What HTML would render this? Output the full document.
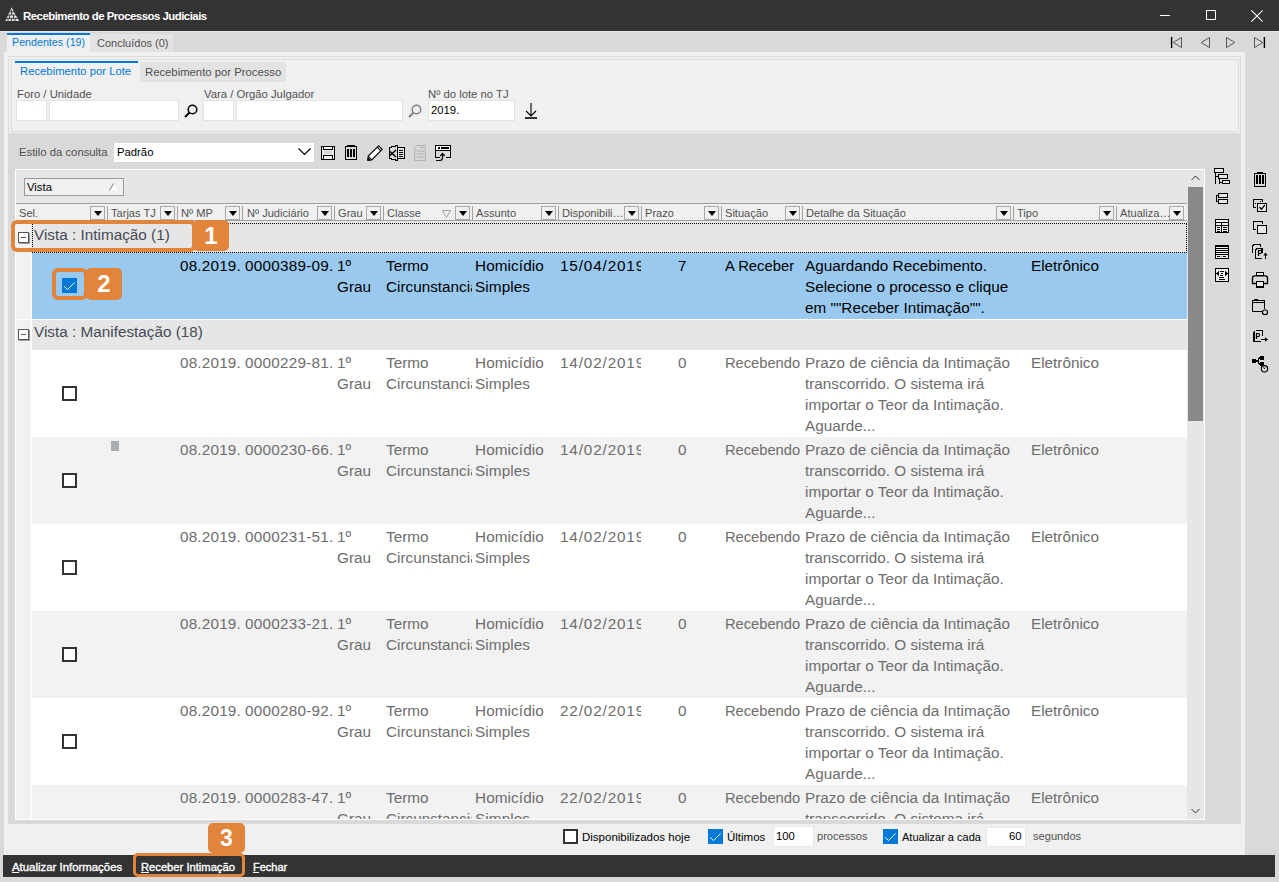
<!DOCTYPE html>
<html><head><meta charset="utf-8">
<style>
*{margin:0;padding:0;box-sizing:border-box}
html,body{width:1279px;height:882px;overflow:hidden;background:#d9d9d9;font-family:"Liberation Sans",sans-serif;}
.a{position:absolute}
.t{position:absolute;white-space:nowrap;font-size:11.3px;line-height:13px;color:#505050}
.inp{position:absolute;background:#fff;border:1px solid #e3e3e3}
.dd{position:absolute;width:15px;height:14px;border:1px solid #a8a8a8;background:#f0f0f0}
.dd:after{content:"";position:absolute;left:3px;top:4px;border-left:4px solid transparent;border-right:4px solid transparent;border-top:5px solid #000}
.sep{position:absolute;width:1px;height:14px;top:206px;background:#a0a0a0}
.ht{position:absolute;white-space:nowrap;font-size:11.1px;line-height:13px;color:#505050;top:207px}
.rt{position:absolute;white-space:pre;font-size:15.3px;line-height:21px;color:#6d6d6d}
.cb{position:absolute;width:15px;height:15px;border:2px solid #333;background:#fff}
.cbc{position:absolute;width:15px;height:15px;background:#0078d7}
.cbc svg{position:absolute;left:0;top:0}
.og{position:absolute;background:#e2843a;border-radius:5px;color:#fff;font-weight:bold;text-align:center}
.ob{position:absolute;border:3px solid #e2843a;border-radius:5px}
svg{position:absolute;overflow:visible}
</style></head><body>

<!-- TITLE BAR -->
<div class="a" style="left:0;top:0;width:1279px;height:31px;background:#333"></div>
<svg style="left:5px;top:7px" width="15" height="15" viewBox="0 0 15 15">
  <path d="M6.5 0.3 L14.2 14 L0.4 14 Z" fill="#e0e0e0"/>
  <path d="M0 4.8 H15 M0 8 H15 M0 11.4 H15" stroke="#333" stroke-width="0.9"/>
  <path d="M6.5 4.8 V8 M4.5 8 V11.4 M8.5 8 V11.4 M3 11.4 V14 M6.5 11.4 V14 M10 11.4 V14 M5.5 2 L7 4.8" stroke="#333" stroke-width="0.9"/>
</svg>
<div class="t" style="left:23px;top:10px;font-size:11.4px;font-weight:bold;color:#fff;letter-spacing:-0.5px">Recebimento de Processos Judiciais</div>
<div class="a" style="left:1160px;top:15px;width:10px;height:1px;background:#fff"></div>
<div class="a" style="left:1206px;top:10px;width:10px;height:10px;border:1px solid #fff"></div>
<svg style="left:1251px;top:10px" width="12" height="12" viewBox="0 0 12 12"><path d="M0.3 0.3 L11.7 11.7 M11.7 0.3 L0.3 11.7" stroke="#fff" stroke-width="1.1"/></svg>

<!-- TAB STRIP -->
<div class="a" style="left:0;top:31px;width:1279px;height:1px;background:#e8e8e8"></div>
<div class="a" style="left:7px;top:33px;width:83px;height:19px;background:#f0f0f0;border-top:2px solid #0078d7"></div>
<div class="t" style="left:12px;top:36px;color:#0078d7;font-size:10.7px">Pendentes (19)</div>
<div class="a" style="left:90px;top:34px;width:83px;height:18px;background:#e3e3e3"></div>
<div class="t" style="left:97px;top:37px;font-size:11px">Concluídos (0)</div>
<!-- nav arrows -->
<svg style="left:0;top:0" width="1279" height="60">
 <path d="M1171.6 37 V48 M1264.4 37 V48" stroke="#000" stroke-width="1.4"/>
 <path d="M1181.5 37.5 L1173.2 42.5 L1181.5 47.5 Z M1209.5 37.5 L1201.2 42.5 L1209.5 47.5 Z M1226.5 37.5 L1234.8 42.5 L1226.5 47.5 Z M1254.5 37.5 L1262.8 42.5 L1254.5 47.5 Z" fill="none" stroke="#555" stroke-width="1"/>
</svg>

<!-- TAB PANE -->
<div class="a" style="left:4px;top:52px;width:1241px;height:803px;background:#f0f0f0"></div>
<!-- filter group -->
<div class="a" style="left:8px;top:56px;width:1233px;height:78px;border:1px solid #dcdcdc"></div>
<div class="a" style="left:11px;top:59px;width:1228px;height:73px;border:1px solid #dcdcdc"></div>
<div class="a" style="left:15px;top:61px;width:123px;height:20px;background:#f0f0f0;border-top:2px solid #0078d7"></div>
<div class="t" style="left:20px;top:65px;color:#0078d7">Recebimento por Lote</div>
<div class="a" style="left:140px;top:62px;width:146px;height:20px;background:#e3e3e3"></div>
<div class="t" style="left:145px;top:66px">Recebimento por Processo</div>

<div class="t" style="left:17px;top:88px">Foro / Unidade</div>
<div class="inp" style="left:16px;top:100px;width:31px;height:21px"></div>
<div class="inp" style="left:49px;top:100px;width:130px;height:21px"></div>
<svg style="left:184px;top:104px" width="14" height="14" viewBox="0 0 14 14"><circle cx="8.5" cy="5.5" r="4.3" fill="none" stroke="#000" stroke-width="1.5"/><path d="M5.5 8.5 L1 13" stroke="#000" stroke-width="2"/></svg>
<div class="t" style="left:204px;top:88px">Vara / Orgão Julgador</div>
<div class="inp" style="left:203px;top:100px;width:31px;height:21px"></div>
<div class="inp" style="left:236px;top:100px;width:167px;height:21px"></div>
<svg style="left:408px;top:104px" width="14" height="14" viewBox="0 0 14 14"><circle cx="8.5" cy="5.5" r="4.3" fill="none" stroke="#808080" stroke-width="1.5"/><path d="M5.5 8.5 L1 13" stroke="#808080" stroke-width="2"/></svg>
<div class="t" style="left:428px;top:88px">Nº do lote no TJ</div>
<div class="inp" style="left:428px;top:100px;width:87px;height:21px"></div>
<div class="t" style="left:431px;top:104px;color:#000">2019.</div>
<svg style="left:525px;top:103px" width="12" height="16" viewBox="0 0 12 16"><path d="M6 0 V13 M1 8 L6 13 L11 8" fill="none" stroke="#000" stroke-width="1.1"/><path d="M0 15 H12" stroke="#000" stroke-width="1.6"/></svg>

<!-- GRAY INNER PANEL -->
<div class="a" style="left:8px;top:134px;width:1233px;height:690px;background:#d9d9d9"></div>


<!-- ESTILO TOOLBAR -->
<div class="t" style="left:19px;top:146px;color:#505050">Estilo da consulta</div>
<div class="a" style="left:114px;top:143px;width:200px;height:19px;background:#fff"></div>
<div class="t" style="left:117px;top:146px;color:#000">Padrão</div>
<svg style="left:298px;top:148px" width="13" height="8" viewBox="0 0 13 8"><path d="M0.5 0.5 L6.5 6.5 L12.5 0.5" fill="none" stroke="#000" stroke-width="1.2"/></svg>
<!-- save -->
<svg style="left:0;top:0" width="1279" height="882" shape-rendering="crispEdges">
 <rect x="321" y="146" width="14" height="14" fill="#000"/>
 <rect x="322" y="147" width="12" height="12" fill="#ececec"/>
 <rect x="324" y="151" width="8" height="3" fill="#d9d9d9"/>
 <rect x="323" y="147" width="10" height="3" fill="#000"/>
 <rect x="324" y="147" width="8" height="2" fill="#fafafa"/>
 <rect x="323" y="155" width="10" height="4" fill="#000"/>
 <rect x="324" y="156" width="8" height="3" fill="#f4f4f4"/>
 <rect x="345" y="146" width="12" height="14" fill="#000"/>
 <rect x="346" y="147" width="10" height="12" fill="#d9d9d9"/>
 <rect x="347" y="145" width="8" height="1" fill="#000"/>
 <rect x="347" y="149" width="2" height="8" fill="#000"/>
 <rect x="350" y="149" width="2" height="8" fill="#000"/>
 <rect x="353" y="149" width="2" height="8" fill="#000"/>
 <rect x="1254" y="173" width="12" height="14" fill="#000"/>
 <rect x="1255" y="174" width="10" height="12" fill="#d9d9d9"/>
 <rect x="1257" y="172" width="6" height="1" fill="#000"/>
 <rect x="1256" y="175" width="2" height="9" fill="#000"/>
 <rect x="1259" y="175" width="2" height="9" fill="#000"/>
 <rect x="1262" y="175" width="2" height="9" fill="#000"/>
</svg>
<!-- pencil -->
<svg style="left:367px;top:145px" width="16" height="16" viewBox="0 0 16 16">
 <path d="M0.7 15.3 L1.2 11.2 L11.6 0.8 L15.2 4.4 L4.8 14.8 Z" fill="#fff" stroke="#000" stroke-width="1.2" stroke-linejoin="round"/>
 <path d="M1.2 11.2 L4.8 14.8 M10.2 2.2 L13.8 5.8" stroke="#000" stroke-width="1.1"/>
 <path d="M0.7 15.3 L1.1 12.6 L3.4 14.9 Z" fill="#000"/>
</svg>
<!-- excel -->
<svg style="left:0;top:0" width="1279" height="882" shape-rendering="crispEdges">
 <path d="M398 145.5 H395.5 V146.5 H391.5 V147.5 H389.5 V158.5 H391.5 V159.5 H395.5 V160.5 H398" fill="none" stroke="#000" stroke-width="1.2"/>
 <rect x="397" y="145" width="1.3" height="16" fill="#000"/>
 <rect x="397.5" y="147.5" width="7" height="11" fill="#e4e4e4" stroke="#000" stroke-width="1.2"/>
 <rect x="399" y="150" width="4" height="1" fill="#000"/>
 <rect x="399" y="152" width="4" height="1" fill="#000"/>
 <rect x="399" y="154" width="4" height="1" fill="#000"/>
 <rect x="399" y="156" width="4" height="1" fill="#000"/>
 <path d="M390 151.5 L396 157 M396 150 L390 155.5" stroke="#000" stroke-width="1.5" shape-rendering="geometricPrecision"/>
</svg>
<!-- doc gray -->
<svg style="left:414px;top:145px" width="12" height="16" viewBox="0 0 12 16">
 <path d="M3 0.5 H11.2 V15.5 H0.8 V2.8 Z" fill="none" stroke="#b0b0b0" stroke-width="1"/>
 <path d="M6 2.5 H10 M2.5 6 H10 M2.5 9 H10 M2.5 12 H10" stroke="#b0b0b0" stroke-width="1"/>
</svg>
<!-- export -->
<svg style="left:0;top:0" width="1279" height="882" shape-rendering="crispEdges">
 <rect x="436" y="146" width="14" height="4" fill="#fafafa"/>
 <rect x="435" y="145" width="16" height="1" fill="#000"/>
 <rect x="435" y="145" width="1" height="13" fill="#000"/>
 <rect x="450" y="145" width="1" height="13" fill="#000"/>
 <rect x="438" y="147" width="2" height="2" fill="#000"/>
 <rect x="441" y="147" width="8" height="2" fill="#000"/>
 <rect x="435" y="150" width="16" height="1" fill="#000"/>
 <rect x="435" y="157" width="5" height="1" fill="#000"/>
 <rect x="446" y="157" width="5" height="1" fill="#000"/>
 <path d="M436 160.5 H439.8 Q442.5 160.5 442.5 157.5 V154" fill="none" stroke="#000" stroke-width="1.2" shape-rendering="geometricPrecision"/>
 <path d="M440.3 156 L442.5 153.5 L444.7 156" fill="none" stroke="#000" stroke-width="1.2" shape-rendering="geometricPrecision"/>
</svg>

<!-- GRID PANEL -->
<div class="a" style="left:15px;top:169px;width:1190px;height:651px;background:#e6e6e6;border-top:1px solid #fff;border-left:1px solid #fff;border-right:1px solid #fff;border-bottom:1px solid #fff"></div>
<div class="a" style="left:24px;top:178px;width:100px;height:18px;border:1px solid #9a9a9a;background:#f0f0f0"></div>
<div class="t" style="left:27px;top:181px;color:#000">Vista</div>
<svg style="left:109px;top:183px" width="9" height="8" viewBox="0 0 9 8"><path d="M4.5 0.5 L8.5 7.5 L0.5 7.5 Z" fill="#fff" stroke="none"/><path d="M4.5 0.5 L0.5 7.5" stroke="#777" stroke-width="1"/></svg>
<div class="a" style="left:16px;top:203px;width:1171px;height:18px;background:#f0f0f0;border-top:1px solid #a0a0a0;border-bottom:1px solid #a0a0a0"></div>
<div class="ht" style="left:19px">Sel.</div>
<div class="dd" style="left:90px;top:206px"></div>
<div class="sep" style="left:107px"></div>
<div class="ht" style="left:111px">Tarjas TJ</div>
<div class="dd" style="left:160px;top:206px"></div>
<div class="sep" style="left:177px"></div>
<div class="ht" style="left:181px">Nº MP</div>
<div class="dd" style="left:225px;top:206px"></div>
<div class="sep" style="left:242px"></div>
<div class="ht" style="left:247px">Nº Judiciário</div>
<div class="dd" style="left:317px;top:206px"></div>
<div class="sep" style="left:334px"></div>
<div class="ht" style="left:338px">Grau</div>
<div class="dd" style="left:366px;top:206px"></div>
<div class="sep" style="left:383px"></div>
<div class="ht" style="left:387px">Classe</div>
<div class="dd" style="left:455px;top:206px"></div>
<div class="sep" style="left:472px"></div>
<div class="ht" style="left:476px">Assunto</div>
<div class="dd" style="left:541px;top:206px"></div>
<div class="sep" style="left:558px"></div>
<div class="ht" style="left:562px">Disponibili…</div>
<div class="dd" style="left:624px;top:206px"></div>
<div class="sep" style="left:641px"></div>
<div class="ht" style="left:645px">Prazo</div>
<div class="dd" style="left:704px;top:206px"></div>
<div class="sep" style="left:721px"></div>
<div class="ht" style="left:725px">Situação</div>
<div class="dd" style="left:785px;top:206px"></div>
<div class="sep" style="left:802px"></div>
<div class="ht" style="left:806px">Detalhe da Situação</div>
<div class="dd" style="left:996px;top:206px"></div>
<div class="sep" style="left:1013px"></div>
<div class="ht" style="left:1017px">Tipo</div>
<div class="dd" style="left:1099px;top:206px"></div>
<div class="sep" style="left:1116px"></div>
<div class="ht" style="left:1120px">Atualiza…</div>
<div class="dd" style="left:1169px;top:206px"></div>
<div class="a" style="left:1187px;top:203px;width:1px;height:18px;background:#a0a0a0"></div>
<svg style="left:442px;top:210px" width="9" height="8" viewBox="0 0 9 8"><path d="M0.5 0.5 L8.5 0.5 L4.5 7.5 Z" fill="none" stroke="#999" stroke-width="0.9"/></svg>

<!-- ROWS -->
<div class="a" style="left:16px;top:221px;width:15px;height:598px;background:#f2f2f2"></div>
<div class="a" style="left:31px;top:253px;width:1px;height:566px;background:#fff"></div>
<div class="a" style="left:32px;top:223px;width:1155px;height:30px;border:1px dotted #000;background:#e6e6e6"></div>
<div class="rt" style="left:34px;top:224px;color:#454b57">Vista : Intimação (1)</div>
<div class="a" style="left:18px;top:232px;width:11px;height:11px;border:1px solid #555;background:#fff;box-shadow:1px 1px 0 #999"></div>
<div class="a" style="left:21px;top:237px;width:5px;height:1px;background:#555"></div>
<div class="a" style="left:32px;top:253px;width:1155px;height:66px;background:#99c9ef"></div>
<div class="rt" style="left:180px;top:255px;width:62px;overflow:hidden;color:#000;letter-spacing:0.18px">08.2019.</div>
<div class="rt" style="left:245px;top:255px;width:92px;overflow:hidden;color:#000;letter-spacing:0.24px">0000389-09.</div>
<div class="rt" style="left:337px;top:255px;width:48px;overflow:hidden;color:#000;">1º<br>Grau</div>
<div class="rt" style="left:386px;top:255px;width:86px;overflow:hidden;color:#000;">Termo<br>Circunstanciado</div>
<div class="rt" style="left:475px;top:255px;width:84px;overflow:hidden;color:#000;letter-spacing:0.1px">Homicídio<br>Simples</div>
<div class="rt" style="left:560px;top:255px;width:81px;overflow:hidden;color:#000;letter-spacing:0.85px">15/04/2019</div>
<div class="rt" style="left:678px;top:255px;width:40px;overflow:hidden;color:#000;">7</div>
<div class="rt" style="left:725px;top:256px;width:78px;overflow:hidden;color:#000;font-size:14.8px">A Receber</div>
<div class="rt" style="left:805px;top:255px;width:210px;overflow:hidden;color:#000;">Aguardando Recebimento.<br>Selecione o processo e clique<br>em ""Receber Intimação"".</div>
<div class="rt" style="left:1031px;top:255px;width:85px;overflow:hidden;color:#000;">Eletrônico</div>
<div class="cbc" style="left:62px;top:278px"><svg width="15" height="15" viewBox="0 0 15 15"><path d="M2.2 8.3 L5.5 11.6 L12.7 4.4" fill="none" stroke="#fff" stroke-width="1"/></svg></div>
<div class="a" style="left:16px;top:319px;width:1171px;height:1px;background:#fff"></div>
<div class="a" style="left:32px;top:320px;width:1155px;height:30px;background:#e6e6e6"></div>
<div class="rt" style="left:34px;top:321px;color:#454b57">Vista : Manifestação (18)</div>
<div class="a" style="left:18px;top:329px;width:11px;height:11px;border:1px solid #555;background:#fff;box-shadow:1px 1px 0 #999"></div>
<div class="a" style="left:21px;top:334px;width:5px;height:1px;background:#555"></div>
<div class="a" style="left:16px;top:350px;width:1171px;height:469px;overflow:hidden">
<div class="a" style="left:16px;top:0px;width:1155px;height:87px;background:#fff"></div>
<div class="rt" style="left:164px;top:2px;width:62px;overflow:hidden;color:#6d6d6d;letter-spacing:0.18px">08.2019.</div>
<div class="rt" style="left:229px;top:2px;width:92px;overflow:hidden;color:#6d6d6d;letter-spacing:0.24px">0000229-81.</div>
<div class="rt" style="left:321px;top:2px;width:48px;overflow:hidden;color:#6d6d6d;">1º<br>Grau</div>
<div class="rt" style="left:370px;top:2px;width:86px;overflow:hidden;color:#6d6d6d;">Termo<br>Circunstanciado</div>
<div class="rt" style="left:459px;top:2px;width:84px;overflow:hidden;color:#6d6d6d;letter-spacing:0.1px">Homicídio<br>Simples</div>
<div class="rt" style="left:544px;top:2px;width:81px;overflow:hidden;color:#6d6d6d;letter-spacing:0.85px">14/02/2019</div>
<div class="rt" style="left:662px;top:2px;width:40px;overflow:hidden;color:#6d6d6d;">0</div>
<div class="rt" style="left:709px;top:3px;width:78px;overflow:hidden;color:#6d6d6d;font-size:14.7px">Recebendo</div>
<div class="rt" style="left:789px;top:2px;width:210px;overflow:hidden;color:#6d6d6d;">Prazo de ciência da Intimação<br>transcorrido. O sistema irá<br>importar o Teor da Intimação.<br>Aguarde...</div>
<div class="rt" style="left:1015px;top:2px;width:85px;overflow:hidden;color:#6d6d6d;">Eletrônico</div>
<div class="cb" style="left:46px;top:36px"></div>
<div class="a" style="left:16px;top:87px;width:1155px;height:87px;background:#f2f2f2"></div>
<div class="rt" style="left:164px;top:89px;width:62px;overflow:hidden;color:#6d6d6d;letter-spacing:0.18px">08.2019.</div>
<div class="rt" style="left:229px;top:89px;width:92px;overflow:hidden;color:#6d6d6d;letter-spacing:0.24px">0000230-66.</div>
<div class="rt" style="left:321px;top:89px;width:48px;overflow:hidden;color:#6d6d6d;">1º<br>Grau</div>
<div class="rt" style="left:370px;top:89px;width:86px;overflow:hidden;color:#6d6d6d;">Termo<br>Circunstanciado</div>
<div class="rt" style="left:459px;top:89px;width:84px;overflow:hidden;color:#6d6d6d;letter-spacing:0.1px">Homicídio<br>Simples</div>
<div class="rt" style="left:544px;top:89px;width:81px;overflow:hidden;color:#6d6d6d;letter-spacing:0.85px">14/02/2019</div>
<div class="rt" style="left:662px;top:89px;width:40px;overflow:hidden;color:#6d6d6d;">0</div>
<div class="rt" style="left:709px;top:90px;width:78px;overflow:hidden;color:#6d6d6d;font-size:14.7px">Recebendo</div>
<div class="rt" style="left:789px;top:89px;width:210px;overflow:hidden;color:#6d6d6d;">Prazo de ciência da Intimação<br>transcorrido. O sistema irá<br>importar o Teor da Intimação.<br>Aguarde...</div>
<div class="rt" style="left:1015px;top:89px;width:85px;overflow:hidden;color:#6d6d6d;">Eletrônico</div>
<div class="cb" style="left:46px;top:123px"></div>
<div class="a" style="left:16px;top:174px;width:1155px;height:87px;background:#fff"></div>
<div class="rt" style="left:164px;top:176px;width:62px;overflow:hidden;color:#6d6d6d;letter-spacing:0.18px">08.2019.</div>
<div class="rt" style="left:229px;top:176px;width:92px;overflow:hidden;color:#6d6d6d;letter-spacing:0.24px">0000231-51.</div>
<div class="rt" style="left:321px;top:176px;width:48px;overflow:hidden;color:#6d6d6d;">1º<br>Grau</div>
<div class="rt" style="left:370px;top:176px;width:86px;overflow:hidden;color:#6d6d6d;">Termo<br>Circunstanciado</div>
<div class="rt" style="left:459px;top:176px;width:84px;overflow:hidden;color:#6d6d6d;letter-spacing:0.1px">Homicídio<br>Simples</div>
<div class="rt" style="left:544px;top:176px;width:81px;overflow:hidden;color:#6d6d6d;letter-spacing:0.85px">14/02/2019</div>
<div class="rt" style="left:662px;top:176px;width:40px;overflow:hidden;color:#6d6d6d;">0</div>
<div class="rt" style="left:709px;top:177px;width:78px;overflow:hidden;color:#6d6d6d;font-size:14.7px">Recebendo</div>
<div class="rt" style="left:789px;top:176px;width:210px;overflow:hidden;color:#6d6d6d;">Prazo de ciência da Intimação<br>transcorrido. O sistema irá<br>importar o Teor da Intimação.<br>Aguarde...</div>
<div class="rt" style="left:1015px;top:176px;width:85px;overflow:hidden;color:#6d6d6d;">Eletrônico</div>
<div class="cb" style="left:46px;top:210px"></div>
<div class="a" style="left:16px;top:261px;width:1155px;height:87px;background:#f2f2f2"></div>
<div class="rt" style="left:164px;top:263px;width:62px;overflow:hidden;color:#6d6d6d;letter-spacing:0.18px">08.2019.</div>
<div class="rt" style="left:229px;top:263px;width:92px;overflow:hidden;color:#6d6d6d;letter-spacing:0.24px">0000233-21.</div>
<div class="rt" style="left:321px;top:263px;width:48px;overflow:hidden;color:#6d6d6d;">1º<br>Grau</div>
<div class="rt" style="left:370px;top:263px;width:86px;overflow:hidden;color:#6d6d6d;">Termo<br>Circunstanciado</div>
<div class="rt" style="left:459px;top:263px;width:84px;overflow:hidden;color:#6d6d6d;letter-spacing:0.1px">Homicídio<br>Simples</div>
<div class="rt" style="left:544px;top:263px;width:81px;overflow:hidden;color:#6d6d6d;letter-spacing:0.85px">14/02/2019</div>
<div class="rt" style="left:662px;top:263px;width:40px;overflow:hidden;color:#6d6d6d;">0</div>
<div class="rt" style="left:709px;top:264px;width:78px;overflow:hidden;color:#6d6d6d;font-size:14.7px">Recebendo</div>
<div class="rt" style="left:789px;top:263px;width:210px;overflow:hidden;color:#6d6d6d;">Prazo de ciência da Intimação<br>transcorrido. O sistema irá<br>importar o Teor da Intimação.<br>Aguarde...</div>
<div class="rt" style="left:1015px;top:263px;width:85px;overflow:hidden;color:#6d6d6d;">Eletrônico</div>
<div class="cb" style="left:46px;top:297px"></div>
<div class="a" style="left:16px;top:348px;width:1155px;height:87px;background:#fff"></div>
<div class="rt" style="left:164px;top:350px;width:62px;overflow:hidden;color:#6d6d6d;letter-spacing:0.18px">08.2019.</div>
<div class="rt" style="left:229px;top:350px;width:92px;overflow:hidden;color:#6d6d6d;letter-spacing:0.24px">0000280-92.</div>
<div class="rt" style="left:321px;top:350px;width:48px;overflow:hidden;color:#6d6d6d;">1º<br>Grau</div>
<div class="rt" style="left:370px;top:350px;width:86px;overflow:hidden;color:#6d6d6d;">Termo<br>Circunstanciado</div>
<div class="rt" style="left:459px;top:350px;width:84px;overflow:hidden;color:#6d6d6d;letter-spacing:0.1px">Homicídio<br>Simples</div>
<div class="rt" style="left:544px;top:350px;width:81px;overflow:hidden;color:#6d6d6d;letter-spacing:0.85px">22/02/2019</div>
<div class="rt" style="left:662px;top:350px;width:40px;overflow:hidden;color:#6d6d6d;">0</div>
<div class="rt" style="left:709px;top:351px;width:78px;overflow:hidden;color:#6d6d6d;font-size:14.7px">Recebendo</div>
<div class="rt" style="left:789px;top:350px;width:210px;overflow:hidden;color:#6d6d6d;">Prazo de ciência da Intimação<br>transcorrido. O sistema irá<br>importar o Teor da Intimação.<br>Aguarde...</div>
<div class="rt" style="left:1015px;top:350px;width:85px;overflow:hidden;color:#6d6d6d;">Eletrônico</div>
<div class="cb" style="left:46px;top:384px"></div>
<div class="a" style="left:16px;top:435px;width:1155px;height:87px;background:#f2f2f2"></div>
<div class="rt" style="left:164px;top:437px;width:62px;overflow:hidden;color:#6d6d6d;letter-spacing:0.18px">08.2019.</div>
<div class="rt" style="left:229px;top:437px;width:92px;overflow:hidden;color:#6d6d6d;letter-spacing:0.24px">0000283-47.</div>
<div class="rt" style="left:321px;top:437px;width:48px;overflow:hidden;color:#6d6d6d;">1º<br>Grau</div>
<div class="rt" style="left:370px;top:437px;width:86px;overflow:hidden;color:#6d6d6d;">Termo<br>Circunstanciado</div>
<div class="rt" style="left:459px;top:437px;width:84px;overflow:hidden;color:#6d6d6d;letter-spacing:0.1px">Homicídio<br>Simples</div>
<div class="rt" style="left:544px;top:437px;width:81px;overflow:hidden;color:#6d6d6d;letter-spacing:0.85px">22/02/2019</div>
<div class="rt" style="left:662px;top:437px;width:40px;overflow:hidden;color:#6d6d6d;">0</div>
<div class="rt" style="left:709px;top:438px;width:78px;overflow:hidden;color:#6d6d6d;font-size:14.7px">Recebendo</div>
<div class="rt" style="left:789px;top:437px;width:210px;overflow:hidden;color:#6d6d6d;">Prazo de ciência da Intimação<br>transcorrido. O sistema irá<br>importar o Teor da Intimação.<br>Aguarde...</div>
<div class="rt" style="left:1015px;top:437px;width:85px;overflow:hidden;color:#6d6d6d;">Eletrônico</div>
<div class="cb" style="left:46px;top:471px"></div>
<div class="a" style="left:95px;top:91px;width:8px;height:10px;background:#a9aeb2"></div>
</div>
<div class="a" style="left:1187px;top:170px;width:17px;height:649px;background:#e6e6e6"></div>
<div class="a" style="left:1188px;top:187px;width:15px;height:234px;background:#898989"></div>
<svg style="left:1191px;top:175px" width="9" height="6" viewBox="0 0 9 6"><path d="M0.5 5 L4.5 1 L8.5 5" fill="none" stroke="#333" stroke-width="1"/></svg>
<svg style="left:1191px;top:808px" width="9" height="6" viewBox="0 0 9 6"><path d="M0.5 1 L4.5 5 L8.5 1" fill="none" stroke="#333" stroke-width="1"/></svg>


<!-- BOTTOM OPTIONS -->
<div class="cb" style="left:563px;top:829px"></div>
<div class="t" style="left:582px;top:831px;color:#000;font-size:11.5px">Disponibilizados hoje</div>
<div class="cbc" style="left:708px;top:829px"><svg width="15" height="15" viewBox="0 0 15 15"><path d="M2.2 8.3 L5.5 11.6 L12.7 4.4" fill="none" stroke="#fff" stroke-width="1"/></svg></div>
<div class="t" style="left:727px;top:831px;color:#000;font-size:11.5px">Últimos</div>
<div class="inp" style="left:773px;top:826px;width:41px;height:21px;border-color:#e8e8e8"></div>
<div class="t" style="left:776px;top:830px;color:#000;font-size:11.3px">100</div>
<div class="t" style="left:817px;top:830px;color:#505050;font-size:11.1px">processos</div>
<div class="cbc" style="left:883px;top:829px"><svg width="15" height="15" viewBox="0 0 15 15"><path d="M2.2 8.3 L5.5 11.6 L12.7 4.4" fill="none" stroke="#fff" stroke-width="1"/></svg></div>
<div class="t" style="left:902px;top:831px;color:#000;font-size:11px">Atualizar a cada</div>
<div class="inp" style="left:986px;top:827px;width:40px;height:20px;border-color:#e8e8e8"></div>
<div class="t" style="left:1009px;top:830px;color:#000;font-size:11.3px">60</div>
<div class="t" style="left:1033px;top:830px;color:#505050;font-size:11.1px">segundos</div>

<!-- BOTTOM BAR -->
<div class="a" style="left:3px;top:855px;width:1272px;height:22px;background:#333"></div>
<div class="t" style="left:12px;top:861px;color:#fff;font-size:11.4px;-webkit-text-stroke:0.35px #fff">Atualizar Informações</div>
<div class="a" style="left:12px;top:872px;width:7px;height:1px;background:#fff"></div>
<div class="t" style="left:141px;top:861px;color:#fff;font-size:11.2px;-webkit-text-stroke:0.35px #fff">Receber Intimação</div>
<div class="a" style="left:141px;top:872px;width:8px;height:1px;background:#fff"></div>
<div class="t" style="left:253px;top:861px;color:#fff;font-size:11px;-webkit-text-stroke:0.35px #fff">Fechar</div>
<div class="a" style="left:253px;top:872px;width:6px;height:1px;background:#fff"></div>

<!-- RIGHT SIDE STRIP -->
<div class="a" style="left:1241px;top:52px;width:4px;height:803px;background:#f0f0f0"></div>

<!-- SIDE ICONS col1 -->
<svg style="left:0;top:0" width="1279" height="882" shape-rendering="crispEdges">
 <g fill="#e8e8e8" stroke="#000" stroke-width="1">
  <!-- tree -->
  <rect x="1214.5" y="168.5" width="9" height="4"/>
  <rect x="1218.5" y="174.5" width="9" height="4"/>
  <rect x="1222.5" y="180.5" width="7" height="3"/>
  <path d="M1215.5 173 V184 M1216 176.5 H1218 M1219.5 179 V184 M1220 182.5 H1222" fill="none" stroke-width="1.3"/>
  <!-- group -->
  <rect x="1218.5" y="193.5" width="9" height="4"/>
  <rect x="1218.5" y="199.5" width="9" height="4"/>
  <path d="M1218 195.5 H1216.5 V201.5 H1218" fill="none"/>
 </g>
 <!-- table -->
 <rect x="1215" y="219" width="14" height="14" fill="#000"/>
 <g fill="#f0f0f0">
  <rect x="1216" y="220" width="12" height="2"/>
  <rect x="1216" y="223" width="5" height="2"/>
  <rect x="1222" y="223" width="6" height="2"/>
  <rect x="1216" y="226" width="5" height="5"/>
  <rect x="1222" y="226" width="6" height="5"/>
  <rect x="1216" y="231" width="1" height="1"/>
  <rect x="1220" y="231" width="1" height="1"/>
  <rect x="1222" y="231" width="1" height="1"/>
  <rect x="1227" y="231" width="1" height="1"/>
 </g>
 <g fill="#000">
  <rect x="1217" y="227" width="3" height="1"/>
  <rect x="1223" y="227" width="4" height="1"/>
  <rect x="1217" y="229" width="3" height="1"/>
  <rect x="1223" y="229" width="4" height="1"/>
 </g>
 <!-- lines -->
 <rect x="1215" y="245" width="14" height="14" fill="#000"/>
 <g fill="#f0f0f0">
  <rect x="1216" y="247" width="12" height="1"/>
  <rect x="1216" y="249" width="12" height="1"/>
  <rect x="1216" y="251" width="12" height="1"/>
  <rect x="1216" y="253" width="12" height="1"/>
  <rect x="1216" y="255" width="12" height="3"/>
 </g>
 <rect x="1217" y="256" width="3" height="1" fill="#000"/>
 <rect x="1223" y="256" width="3" height="1" fill="#000"/>
 <rect x="1221" y="256" width="1" height="1" fill="#888"/>
 <!-- expand -->
 <rect x="1215.5" y="268.5" width="13" height="13" fill="#ececec" stroke="#000" stroke-width="1"/>
 <path d="M1216 273.5 L1219 270.8 L1219 276.2 Z M1228 273.5 L1225 270.8 L1225 276.2 Z" fill="#000" shape-rendering="geometricPrecision"/>
 <g fill="#000">
  <rect x="1216" y="273" width="3" height="1"/>
  <rect x="1225" y="273" width="3" height="1"/>
  <rect x="1220" y="271" width="4" height="1"/>
  <rect x="1221" y="273" width="2" height="1"/>
  <rect x="1220" y="275" width="3" height="1"/>
  <rect x="1219" y="277" width="5" height="1"/>
  <rect x="1219" y="279" width="6" height="1"/>
 </g>

 <!-- check copy -->
 <path d="M1256 207.5 H1253.5 V199.5 H1262.5 V202" fill="none" stroke="#000" stroke-width="1.2"/>
 <rect x="1257.5" y="203.5" width="9" height="8" fill="#e8e8e8" stroke="#000" stroke-width="1.3"/>
 <rect x="1255" y="203" width="1" height="1" fill="#000"/>
 <rect x="1260" y="201" width="1" height="1" fill="#000"/>
 <path d="M1259.5 207 L1261.5 209.3 L1264.8 205" fill="none" stroke="#000" stroke-width="1.3" shape-rendering="geometricPrecision"/>
 <!-- copy -->
 <path d="M1256 229.5 H1253.5 V221.5 H1262.5 V224" fill="none" stroke="#000" stroke-width="1.2"/>
 <rect x="1257.5" y="225.5" width="9" height="8" fill="#e8e8e8" stroke="#000" stroke-width="1.3"/>
 <!-- P up -->
 <path d="M1252.5 253 V246 L1254 244.5 H1260.5 V247" fill="none" stroke="#000" stroke-width="1.2"/>
 <path d="M1262 253 V248.5 H1257 L1255.5 250 V258.5 H1262" fill="none" stroke="#000" stroke-width="1.3"/>
 <path d="M1258.5 256 V250.5 H1260.5 Q1261.5 250.5 1261.5 252 Q1261.5 253.5 1260.5 253.5 H1258.5" fill="none" stroke="#000" stroke-width="1.2" shape-rendering="geometricPrecision"/>
 <path d="M1265.5 258.5 V254" stroke="#000" stroke-width="1.6"/>
 <path d="M1263.3 255.5 L1265.5 252.5 L1267.7 255.5 Z" fill="#000" shape-rendering="geometricPrecision"/>
 <!-- printer -->
 <rect x="1256.5" y="272.5" width="7" height="3" fill="#e8e8e8" stroke="#000" stroke-width="1.2"/>
 <path d="M1256 283.5 H1252.5 V278 Q1252.5 275.8 1254.5 275.8 H1265.5 Q1267.5 275.8 1267.5 278 V283.5 H1264" fill="none" stroke="#000" stroke-width="1.3" shape-rendering="geometricPrecision"/>
 <rect x="1256.5" y="281.5" width="7" height="5.5" fill="#e8e8e8" stroke="#000" stroke-width="1.3"/>
 <!-- folder -->
 <path d="M1262 311.5 H1252.5 V300.5 H1264.5 V309" fill="none" stroke="#000" stroke-width="1.3"/>
 <path d="M1254 300 H1258" stroke="#000" stroke-width="1.5"/>
 <path d="M1253 302.5 H1264" stroke="#000" stroke-width="1"/>
 <rect x="1262.5" y="310" width="5" height="4.5" rx="2" fill="#d9d9d9" stroke="#000" stroke-width="1.2" shape-rendering="geometricPrecision"/>
 <!-- P right -->
 <path d="M1256 331 V330.5 H1262.5 V336" fill="none" stroke="#000" stroke-width="1"/>
 <path d="M1255 331.5 L1254 332.5 V341.5 H1261" fill="none" stroke="#000" stroke-width="1.3"/>
 <path d="M1256.5 339 V333.5 H1258.5 Q1259.5 333.5 1259.5 335 Q1259.5 336.5 1258.5 336.5 H1256.5" fill="none" stroke="#000" stroke-width="1.2" shape-rendering="geometricPrecision"/>
 <path d="M1261 339.5 H1265.5" stroke="#000" stroke-width="1.6"/>
 <path d="M1265 337.3 L1268 339.5 L1265 341.7 Z" fill="#000" shape-rendering="geometricPrecision"/>
 <!-- tree flow -->
 <rect x="1252" y="359" width="4" height="4" fill="#000"/>
 <rect x="1260" y="356" width="4" height="4" fill="#000"/>
 <rect x="1260" y="362" width="4" height="4" fill="#000"/>
 <path d="M1256 361 H1258.5 M1258.5 358 V364 M1258.5 358 H1260 M1258.5 364 H1260" fill="none" stroke="#000" stroke-width="1.1"/>
 <circle cx="1264.5" cy="368.8" r="3.2" fill="#d9d9d9" stroke="#000" stroke-width="1.1" shape-rendering="geometricPrecision"/>
 <path d="M1263.5 367.3 L1264.5 368.8 L1265.7 367.5" fill="none" stroke="#000" stroke-width="0.9" shape-rendering="geometricPrecision"/>
</svg>

<!-- ANNOTATIONS -->
<div class="ob" style="left:11px;top:220px;width:185px;height:32px;border-width:4px;border-radius:6px"></div>
<div class="og" style="left:193px;top:220px;width:36px;height:31px;font-size:24px;line-height:31px">1</div>
<div class="ob" style="left:52px;top:268px;width:36px;height:32px;border-width:4px;border-radius:6px"></div>
<div class="og" style="left:86px;top:268px;width:36px;height:32px;font-size:24px;line-height:32px">2</div>
<div class="og" style="left:208px;top:823px;width:37px;height:30px;font-size:23px;line-height:30px">3</div>
<div class="ob" style="left:133px;top:853px;width:112px;height:24px;border-width:3px"></div>

</body></html>
